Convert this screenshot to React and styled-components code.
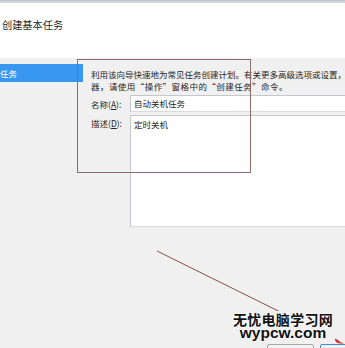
import React from "react";
import styled, { createGlobalStyle } from "styled-components";

const Global = createGlobalStyle`
  html, body { margin: 0; padding: 0; width: 345px; height: 348px; overflow: hidden; background: #f0f0f0; }
  #root { width: 345px; height: 348px; }
`;

const CJK = `"Noto Sans CJK SC", "Noto Sans", sans-serif`;

const Window = styled.div`
  position: relative;
  width: 345px;
  height: 348px;
  overflow: hidden;
  display: flex;
  flex-direction: column;
  background: #f0f0f0;
  font-family: ${CJK};
  color: #262626;
  text-spacing-trim: space-all;
`;

const FrameStrip = styled.div`
  flex: none;
  height: 3px;
  background: linear-gradient(#bcc6d2, #d6dce4);
`;

const Header = styled.div`
  flex: none;
  height: 55px;
  box-sizing: border-box;
  background: #ffffff;
  padding: 16px 0 0 2px;
`;

const Title = styled.div`
  font-size: 10.2px;
  line-height: 12px;
  color: #1f1f1f;
  white-space: nowrap;
`;

const Body = styled.div`
  flex: 1;
  display: flex;
  min-height: 0;
`;

const Nav = styled.div`
  flex: none;
  width: 83px;
  padding-top: 6px;
`;

const NavItem = styled.div`
  height: 18px;
  line-height: 18px;
  font-size: 8.5px;
  padding-left: 0;
  white-space: nowrap;
  overflow: hidden;
  color: ${(p) => (p.$selected ? "#ffffff" : "#262626")};
  background: ${(p) => (p.$selected ? "#3897f0" : "transparent")};
`;

const Content = styled.div`
  flex: 1;
  min-width: 0;
  overflow: hidden;
  padding: 10px 0 0 8px;
  font-size: 8.5px;
`;

const IntroLine = styled.div`
  line-height: 12px;
  white-space: nowrap;
  letter-spacing: ${(p) => p.$spacing || 0}px;
`;

const FieldRow = styled.div`
  display: flex;
  align-items: ${(p) => (p.$top ? "flex-start" : "center")};
  margin-top: 3px;
`;

const Label = styled.div`
  flex: none;
  width: 39px;
  line-height: 12px;
  white-space: nowrap;
  padding-top: ${(p) => (p.$top ? "2px" : "0")};

  u { text-decoration: underline; }
`;

const Box = styled.div`
  flex: none;
  width: 240px;
  box-sizing: border-box;
  background: #ffffff;
  border: 1px solid #c4c7cc;
  border-bottom-color: #d9dadd;
  padding: ${(p) => (p.$multi ? "2px 3px" : "0 3px")};
  height: ${(p) => (p.$multi ? "112px" : "17px")};
  line-height: ${(p) => (p.$multi ? "12px" : "15px")};
  white-space: nowrap;
`;

const Footer = styled.div`
  flex: none;
  height: 4px;
  display: flex;
  gap: 6px;
  padding-left: 267px;
  overflow: hidden;
`;

const Button = styled.div`
  flex: none;
  width: ${(p) => p.$w}px;
  height: 22px;
  box-sizing: border-box;
  border: 1px solid ${(p) => (p.$primary ? "#4d86c0" : "#a9a9a9")};
  border-radius: 2px;
  background: ${(p) => (p.$primary ? "linear-gradient(#e8f2fc, #d2e6f9)" : "linear-gradient(#f4f4f4, #e3e3e3)")};
`;

const RedFrame = styled.div`
  position: absolute;
  left: 77px;
  top: 59px;
  width: 174px;
  height: 114px;
  box-sizing: border-box;
  border: 1px solid #8f6a6a;
  pointer-events: none;
`;

const Overlay = styled.svg`
  position: absolute;
  left: 0;
  top: 0;
  pointer-events: none;
`;

const Watermark = styled.div`
  position: absolute;
  left: 231px;
  top: 311px;
  width: 104px;
  height: 30px;
  background: #f0f0f0;
  display: flex;
  flex-direction: column;
  align-items: center;
  text-shadow: 0 0 2px #ffffff, 0 0 2px #ffffff;
`;

const WmCn = styled.div`
  font-family: ${CJK};
  font-weight: 700;
  font-size: 14px;
  line-height: 16px;
  letter-spacing: 0.3px;
  color: #111;
  white-space: nowrap;
`;

const WmEn = styled.div`
  font-family: "Liberation Sans", Arial, sans-serif;
  font-weight: 700;
  font-size: 15.5px;
  line-height: 12px;
  color: #111;
  white-space: nowrap;
`;

export default function App() {
  return (
    <Window>
      <Global />
      <FrameStrip />
      <Header>
        <Title>创建基本任务</Title>
      </Header>
      <Body>
        <Nav>
          <NavItem $selected>任务</NavItem>
        </Nav>
        <Content>
          <IntroLine>利用该向导快速地为常见任务创建计划。有关更多高级选项或设置，</IntroLine>
          <IntroLine $spacing={0.45}>器，请使用“操作”窗格中的“创建任务”命令。</IntroLine>
          <FieldRow>
            <Label>名称(<u>A</u>):</Label>
            <Box>自动关机任务</Box>
          </FieldRow>
          <FieldRow $top>
            <Label $top>描述(<u>D</u>):</Label>
            <Box $multi>定时关机</Box>
          </FieldRow>
        </Content>
      </Body>
      <Footer>
        <Button $w={47} />
        <Button $w={75} $primary />
      </Footer>

      <RedFrame />
      <Overlay width="345" height="348" viewBox="0 0 345 348">
        <line x1="157" y1="251" x2="339" y2="341" stroke="#8a4f4f" strokeWidth="1" />
        <polygon points="344,344 333,337.5 337,343" fill="#d23a3a" />
      </Overlay>
      <Watermark>
        <WmCn>无忧电脑学习网</WmCn>
        <WmEn>wypcw.com</WmEn>
      </Watermark>
    </Window>
  );
}
